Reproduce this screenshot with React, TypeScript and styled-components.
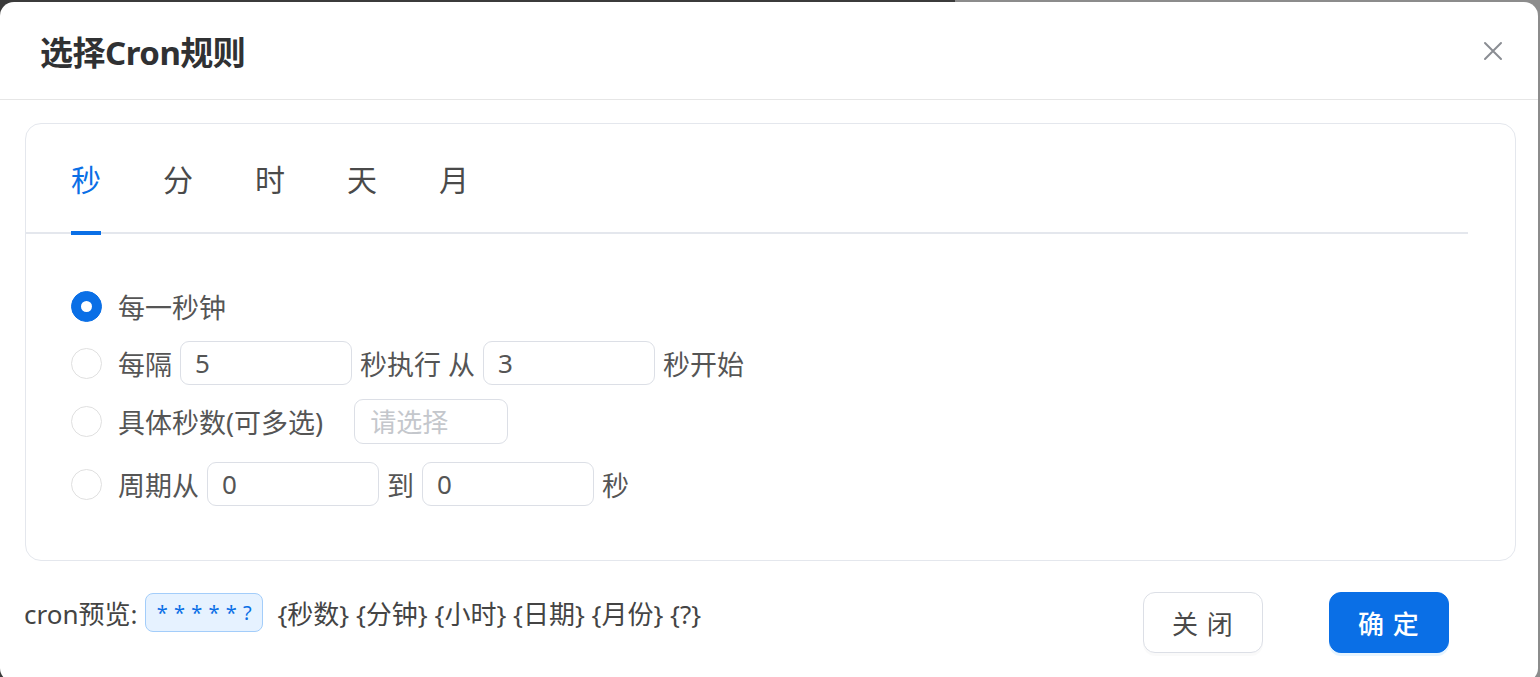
import React, { useState } from 'react';
import styled, { createGlobalStyle } from 'styled-components';

const BLUE = '#0a6fe6';

const GlobalStyle = createGlobalStyle`
  html, body {
    margin: 0;
    padding: 0;
    height: 677px;
    overflow: hidden;
  }
  body {
    background: linear-gradient(to right, #3b3b3b 0, #3b3b3b 62%, #8c8c8c 62%, #8c8c8c 100%);
    font-family: "Noto Sans", "Noto Sans CJK SC", sans-serif;
  }
`;

const Overlay = styled.div`
  padding: 2px 2px 0 0;
`;

const Dialog = styled.section`
  width: 1538px;
  height: 680px;
  background: #fff;
  border-radius: 14px;
  display: flex;
  flex-direction: column;
`;

const Header = styled.header`
  height: 97px;
  padding: 0 34px 0 40px;
  display: flex;
  align-items: center;
  justify-content: space-between;
  border-bottom: 1px solid #e6e6e6;
`;

const Title = styled.h2`
  margin: 0;
  font-size: 33px;
  font-weight: 700;
  color: #303133;
  letter-spacing: -0.5px;
`;

const CloseBtn = styled.button`
  border: 0;
  background: none;
  padding: 0;
  width: 22px;
  height: 22px;
  display: flex;
  align-items: center;
  justify-content: center;
  cursor: pointer;
`;

const Body = styled.div`
  padding: 23px 22px 0 25px;
`;

const Card = styled.div`
  height: 436px;
  border: 1px solid #e4e7ed;
  border-radius: 16px;
`;

const TabNav = styled.div`
  height: 108px;
  margin-right: 47px;
  padding-left: 45px;
  display: flex;
  gap: 62px;
  border-bottom: 2px solid #e4e7ed;
`;

const Tab = styled.div<{ $active?: boolean }>`
  position: relative;
  display: flex;
  align-items: center;
  font-size: 30px;
  color: ${p => (p.$active ? BLUE : '#4a4a4a')};
  cursor: pointer;

  &::after {
    content: '';
    position: absolute;
    left: 0;
    right: 0;
    bottom: -3px;
    height: 4px;
    background: ${p => (p.$active ? BLUE : 'transparent')};
  }
`;

const Pane = styled.div`
  padding: 50px 45px 0;
`;

const Row = styled.div<{ $gap?: number }>`
  height: 44px;
  display: flex;
  align-items: center;
  margin-top: ${p => p.$gap ?? 0}px;
`;

const Radio = styled.span<{ $checked?: boolean }>`
  width: 31px;
  height: 31px;
  box-sizing: border-box;
  border-radius: 50%;
  border: 1px solid ${p => (p.$checked ? BLUE : '#e0e0e0')};
  background: ${p => (p.$checked ? BLUE : '#fff')};
  margin-right: 16px;
  display: flex;
  align-items: center;
  justify-content: center;
  flex-shrink: 0;
  cursor: pointer;

  &::after {
    content: '';
    width: 11px;
    height: 11px;
    border-radius: 50%;
    background: #fff;
    display: ${p => (p.$checked ? 'block' : 'none')};
  }
`;

const Line = styled.div`
  display: flex;
  align-items: center;
  gap: 8px;
  font-size: 27px;
  color: #555;
`;

const Input = styled.input`
  width: 172px;
  height: 44px;
  box-sizing: border-box;
  border: 1px solid #dcdfe6;
  border-radius: 9px;
  padding: 0 14px;
  font: inherit;
  font-size: 26px;
  color: #555;
  outline: none;
`;

const Select = styled.div`
  width: 154px;
  height: 45px;
  box-sizing: border-box;
  margin-left: 23px;
  border: 1px solid #dcdfe6;
  border-radius: 9px;
  padding: 0 15px;
  display: flex;
  align-items: center;
  font-size: 26px;
  color: #c4c7cc;
`;

const Footer = styled.footer`
  padding: 31px 89px 0 24px;
  display: flex;
  align-items: flex-start;
`;

const Preview = styled.div`
  height: 39px;
  margin-top: 1px;
  display: flex;
  align-items: center;
  font-size: 26px;
  color: #444;
`;

const Tag = styled.span`
  width: 118px;
  height: 39px;
  box-sizing: border-box;
  margin: 0 14px 0 8px;
  display: flex;
  align-items: center;
  justify-content: center;
  background: #e6f2ff;
  border: 1px solid #a3cdfa;
  border-radius: 8px;
  color: ${BLUE};
  font-size: 20px;
  letter-spacing: 0.5px;
  white-space: pre;
`;

const Actions = styled.div`
  margin-left: auto;
  display: flex;
  gap: 66px;
`;

const Button = styled.button<{ $primary?: boolean }>`
  width: 120px;
  height: 61px;
  border-radius: 12px;
  border: 1px solid ${p => (p.$primary ? BLUE : '#dcdfe6')};
  background: ${p => (p.$primary ? BLUE : '#fff')};
  color: ${p => (p.$primary ? '#fff' : '#4a4a4a')};
  font-family: inherit;
  font-size: 26px;
  font-weight: ${p => (p.$primary ? 500 : 400)};
  letter-spacing: 1px;
  box-shadow: ${p => (p.$primary ? '0 3px 0 rgba(5,145,255,0.1)' : '0 3px 0 rgba(0,0,0,0.02)')};
  cursor: pointer;
`;

const tabs = ['秒', '分', '时', '天', '月'];

const App = () => {
  const [active, setActive] = useState(0);
  const [mode, setMode] = useState(0);

  return (
    <Overlay>
      <GlobalStyle />
      <Dialog>
        <Header>
          <Title>选择Cron规则</Title>
          <CloseBtn aria-label="close">
            <svg width="20" height="20" viewBox="0 0 20 20">
              <path d="M2 2 L18 18 M18 2 L2 18" stroke="#8a8d93" strokeWidth="2" strokeLinecap="round" />
            </svg>
          </CloseBtn>
        </Header>

        <Body>
          <Card>
            <TabNav>
              {tabs.map((t, i) => (
                <Tab key={t} $active={i === active} onClick={() => setActive(i)}>
                  {t}
                </Tab>
              ))}
            </TabNav>

            <Pane>
              <Row>
                <Radio $checked={mode === 0} onClick={() => setMode(0)} />
                <Line>每一秒钟</Line>
              </Row>
              <Row $gap={13}>
                <Radio $checked={mode === 1} onClick={() => setMode(1)} />
                <Line>
                  每隔
                  <Input defaultValue="5" />
                  秒执行 从
                  <Input defaultValue="3" />
                  秒开始
                </Line>
              </Row>
              <Row $gap={14}>
                <Radio $checked={mode === 2} onClick={() => setMode(2)} />
                <Line>
                  具体秒数(可多选)
                  <Select>请选择</Select>
                </Line>
              </Row>
              <Row $gap={19}>
                <Radio $checked={mode === 3} onClick={() => setMode(3)} />
                <Line>
                  周期从
                  <Input defaultValue="0" />
                  到
                  <Input defaultValue="0" />
                  秒
                </Line>
              </Row>
            </Pane>
          </Card>
        </Body>

        <Footer>
          <Preview>
            cron预览:
            <Tag>* * * * * ?</Tag>
            {'{秒数} {分钟} {小时} {日期} {月份} {?}'}
          </Preview>
          <Actions>
            <Button>关 闭</Button>
            <Button $primary>确 定</Button>
          </Actions>
        </Footer>
      </Dialog>
    </Overlay>
  );
};

export default App;
